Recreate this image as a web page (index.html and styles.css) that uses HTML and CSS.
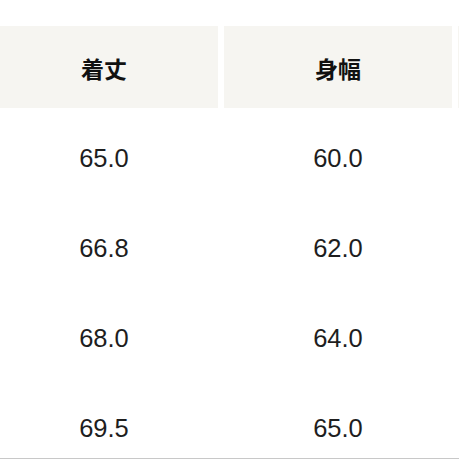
FILE: index.html
```html
<!DOCTYPE html>
<html lang="ja">
<head>
<meta charset="utf-8">
<link rel="stylesheet" href="styles.css">
</head>
<body>
<div class="sheet">
  <div class="table">
    <div class="head">着丈</div>
    <div class="head">身幅</div>
    <div class="head"></div>
    <div class="cell">65.0</div>
    <div class="cell">60.0</div>
    <div class="cell"></div>
    <div class="cell">66.8</div>
    <div class="cell">62.0</div>
    <div class="cell"></div>
    <div class="cell">68.0</div>
    <div class="cell">64.0</div>
    <div class="cell"></div>
    <div class="cell last">69.5</div>
    <div class="cell last">65.0</div>
    <div class="cell last"></div>
  </div>
</div>
</body>
</html>
```

FILE: styles.css
```css
html, body {
  margin: 0;
  padding: 0;
  background: #ffffff;
  overflow: hidden;
}
.sheet {
  width: 459px;
  height: 459px;
  overflow: hidden;
  position: relative;
}
.table {
  display: grid;
  grid-template-columns: 228px 228px 228px;
  column-gap: 6px;
  margin-left: -10px;
  padding-top: 26px;
  border-bottom: 1px solid #c8c8c8;
  width: 700px;
}
.head {
  height: 82px;
  background: #f6f5f1;
  display: flex;
  align-items: center;
  justify-content: center;
  font-family: "Noto Sans CJK JP", sans-serif;
  font-weight: 700;
  font-size: 23px;
  color: #111;
  padding-top: 2px;
  box-sizing: border-box;
  margin-bottom: 5px;
}
.cell {
  height: 90px;
  display: flex;
  align-items: center;
  justify-content: center;
  font-family: "Liberation Sans", Arial, sans-serif;
  font-size: 25.5px;
  color: #1e1e1e;
}
.cell.last {
  height: 75px;
  align-items: flex-start;
  padding-top: 31px;
  box-sizing: border-box;
}
```
